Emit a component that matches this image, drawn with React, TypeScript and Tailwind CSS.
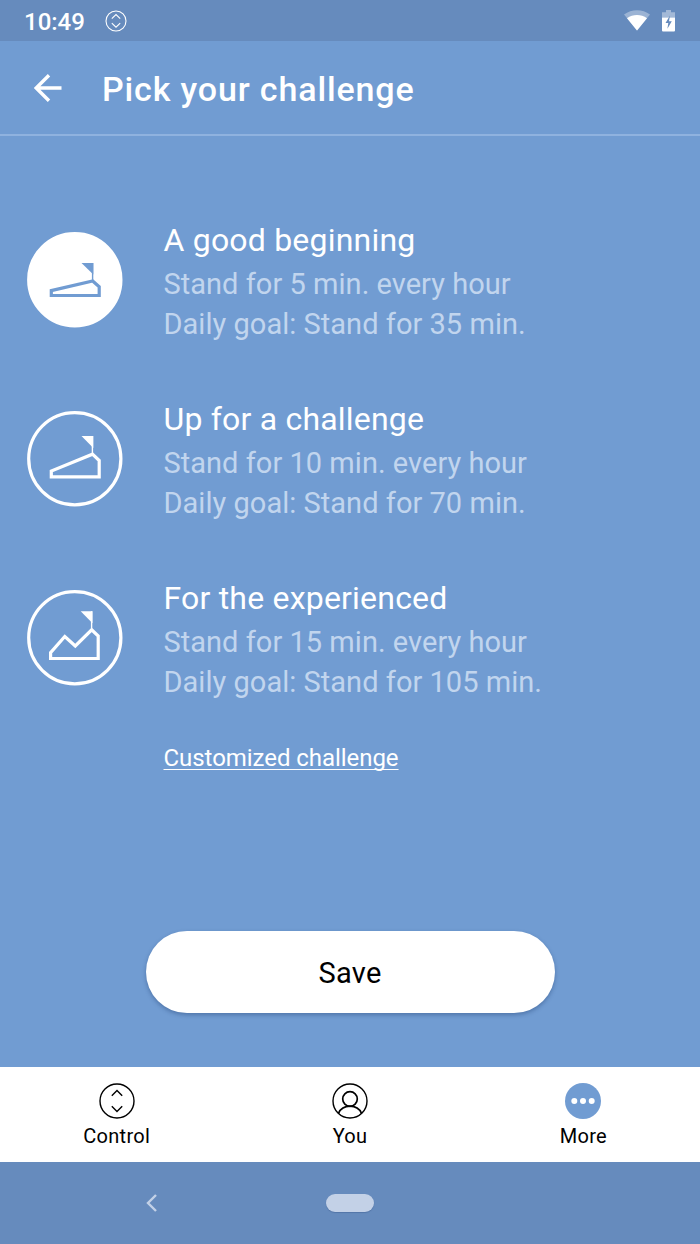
import type { ReactNode } from 'react';

interface Challenge {
  title: string;
  frequency: string;
  goal: string;
  outline: string;
  flag: string;
  pole: string;
  selected?: boolean;
}

const challenges: Challenge[] = [
  {
    title: 'A good beginning',
    frequency: 'Stand for 5 min. every hour',
    goal: 'Daily goal: Stand for 35 min.',
    outline: 'M24.3 58.6V63.5H72.2V54.8L65.7 49Z',
    flag: 'M54.5 31H66.3V42.5Z',
    pole: 'M65.6 31V48',
    selected: true,
  },
  {
    title: 'Up for a challenge',
    frequency: 'Stand for 10 min. every hour',
    goal: 'Daily goal: Stand for 70 min.',
    outline: 'M24.3 60V65.8H72.2V49.5L65.5 43.2Z',
    flag: 'M54.5 25H66.3V37Z',
    pole: 'M65.4 25V42',
  },
  {
    title: 'For the experienced',
    frequency: 'Stand for 15 min. every hour',
    goal: 'Daily goal: Stand for 105 min.',
    outline: 'M23.6 62.6V68.5H71.2V46L64.7 39.8L48.3 56L37.8 46.5Z',
    flag: 'M53.7 21.2H65.5V33.2Z',
    pole: 'M64.6 21.2V38.5',
  },
];

const ChallengeIcon = ({ challenge }: { challenge: Challenge }) => {
  const color = challenge.selected ? '#719cd2' : '#ffffff';
  return (
    <svg viewBox="0 0 96 96" className="h-24 w-24 shrink-0" fill="none">
      <circle
        cx="47.8"
        cy="47.8"
        r="46.1"
        stroke="#ffffff"
        strokeWidth="3.2"
        fill={challenge.selected ? '#ffffff' : 'none'}
      />
      <path d={challenge.outline} stroke={color} strokeWidth="3.2" />
      <path d={challenge.flag} fill={color} />
      <path d={challenge.pole} stroke={color} strokeWidth="1.4" />
    </svg>
  );
};

const ControlIcon = ({ className, strokeWidth = 1.4 }: { className: string; strokeWidth?: number }) => (
  <svg viewBox="0 0 36 36" className={className} fill="none" stroke="currentColor" strokeWidth={strokeWidth}>
    <circle cx="18" cy="18" r="17" />
    <path d="M12.8 12.8L18 7.6L23.2 12.8M12.8 23.2L18 28.4L23.2 23.2" />
  </svg>
);

const NavItem = ({ label, children }: { label: string; children: ReactNode }) => (
  <button className="flex flex-1 flex-col items-center pt-4 text-black">
    {children}
    <span className="mt-1 text-[20px] leading-[27px] tracking-[0.3px]">{label}</span>
  </button>
);

export default function App() {
  return (
    <div className="flex h-[1244px] w-[700px] flex-col overflow-hidden bg-[#719cd2] font-['Roboto',sans-serif] text-white">
      {/* Status bar */}
      <div className="flex h-[41px] shrink-0 items-center bg-[#668bbd] pr-6 pl-6">
        <span className="pt-[3px] text-[24px] leading-none font-medium">10:49</span>
        <svg viewBox="0 0 22 22" className="ml-5 h-[22px] w-[22px]" fill="none" stroke="#ffffff" strokeWidth="1.1">
          <circle cx="11" cy="11" r="10" />
          <path d="M6.8 8.6L11 4.6L15.2 8.6M6.8 13.2L11 17.2L15.2 13.2" />
        </svg>
        <svg viewBox="0 0 26 22" className="ml-auto h-[22px] w-[26px]" fill="#ffffff">
          <path d="M0 4.5C7.5-1.2 18.5-1.2 26 4.5L13 20.5Z" opacity="0.35" />
          <path d="M3 8.2C9 4 17 4 23 8.2L13 20.5Z" />
        </svg>
        <svg viewBox="0 0 13 22" className="mr-px ml-3 h-[22px] w-[13px]">
          <path d="M0 2.3H4V0H9V2.3H13V7.5H0Z" fill="#ffffff" opacity="0.4" />
          <path d="M0 7.5H13V20.5Q13 21.5 12 21.5H1Q0 21.5 0 20.5Z" fill="#ffffff" />
          <path d="M8 5.5L3.5 13H6.3L5.4 18.8L9.8 11.2H7Z" fill="#668bbd" />
        </svg>
      </div>

      {/* Header */}
      <header className="flex h-[95px] shrink-0 items-center border-b-2 border-[#8fb2df] pl-[34px]">
        <svg viewBox="0 0 28 28" className="mt-px h-7 w-7" fill="none" stroke="#ffffff" strokeWidth="3.4">
          <path d="M27.5 14H2.5M15 1.2L2.2 14L15 26.8" />
        </svg>
        <h1 className="mt-0.5 ml-10 text-[34px] leading-none font-medium tracking-[0.85px]">Pick your challenge</h1>
      </header>

      {/* Challenges */}
      <main className="flex flex-1 flex-col pt-[83px]">
        {challenges.map((challenge) => (
          <button key={challenge.title} className="flex h-[179px] items-start pl-[27px] text-left">
            <div className="pt-[13px]">
              <ChallengeIcon challenge={challenge} />
            </div>
            <div className="ml-[40.5px]">
              <h2 className="mb-[3px] text-[32px] leading-[42px] tracking-[0.2px]">{challenge.title}</h2>
              <p className="text-[29px] leading-[40px] tracking-[0.03px] text-[#c1d5ee]">{challenge.frequency}</p>
              <p className="text-[29px] leading-[40px] tracking-[0.03px] text-[#c1d5ee]">{challenge.goal}</p>
            </div>
          </button>
        ))}
        <a
          href="#"
          className="-mt-[14px] ml-[163.5px] self-start text-[24px] leading-[32px] tracking-[-0.05px] underline decoration-1 underline-offset-[3px] [text-decoration-skip-ink:none]"
        >
          Customized challenge
        </a>
        <button className="mx-auto mt-auto mb-[54px] h-[82px] w-[409px] rounded-full bg-white pt-[3px] text-[29px] tracking-[0.3px] text-black shadow-[0_2px_4px_rgba(30,60,110,0.4)]">
          Save
        </button>
      </main>

      {/* Tab bar */}
      <nav className="flex h-[95px] shrink-0 bg-white">
        <NavItem label="Control">
          <ControlIcon className="h-9 w-9" />
        </NavItem>
        <NavItem label="You">
          <svg viewBox="0 0 36 36" className="h-9 w-9" fill="none" stroke="currentColor" strokeWidth="1.4">
            <circle cx="18" cy="18" r="17" />
            <circle cx="18" cy="16" r="7.3" strokeWidth="1.7" />
            <path d="M6.5 30.3C8.5 25.8 13 23.2 18 23.2S27.5 25.8 29.5 30.3" strokeWidth="1.7" />
          </svg>
        </NavItem>
        <NavItem label="More">
          <svg viewBox="0 0 36 36" className="h-9 w-9">
            <circle cx="18" cy="18" r="18" fill="#719cd2" />
            <circle cx="9.3" cy="18" r="3" fill="#ffffff" />
            <circle cx="18" cy="18" r="3" fill="#ffffff" />
            <circle cx="26.7" cy="18" r="3" fill="#ffffff" />
          </svg>
        </NavItem>
      </nav>

      {/* System navigation */}
      <div className="flex h-[82px] shrink-0 items-center bg-[#668bbd] pl-[146px]">
        <svg viewBox="0 0 11 18" className="h-[18px] w-[11px]" fill="none" stroke="#c3d1e7" strokeWidth="2.4">
          <path d="M10 1L2 9L10 17" />
        </svg>
        <div className="ml-[169px] h-[18px] w-12 rounded-full bg-[#c3d1e7] shadow-[0_1px_1px_rgba(40,70,120,0.3)]" />
      </div>
    </div>
  );
}
